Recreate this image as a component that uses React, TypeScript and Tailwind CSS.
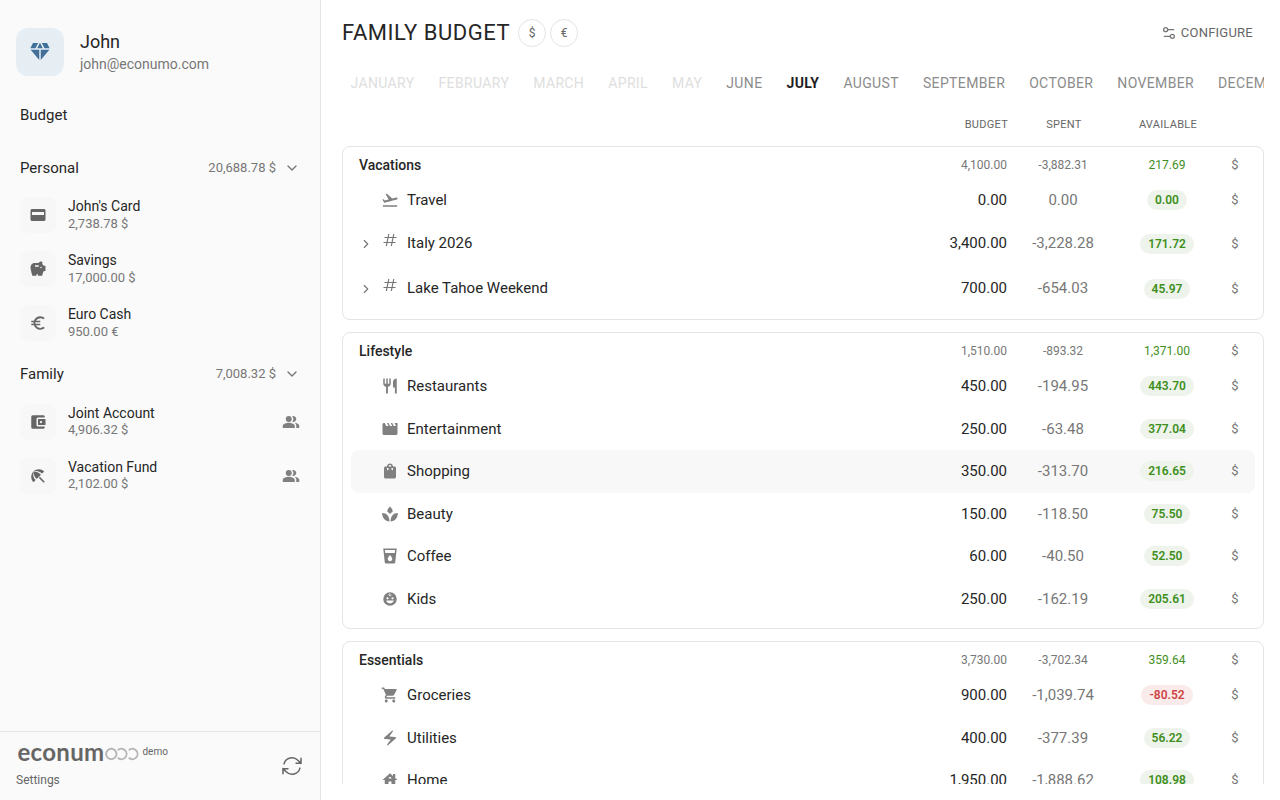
import type { ComponentType, ReactNode } from 'react';
import {
  MdAccountBalanceWallet,
  MdBeachAccess,
  MdDiamond,
  MdElectricBolt,
  MdEuroSymbol,
  MdFlightTakeoff,
  MdHouse,
  MdLocalDrink,
  MdMovie,
  MdPeopleAlt,
  MdRestaurant,
  MdSavings,
  MdShoppingBag,
  MdShoppingCart,
} from 'react-icons/md';
import { HiOutlineArrowPath } from 'react-icons/hi2';
import { ChevronDown, ChevronRight, Settings2 } from 'lucide-react';

type Icon = ComponentType<{ className?: string }>;

function CardIcon({ className }: { className?: string }) {
  return (
    <svg viewBox="0 0 24 24" fill="currentColor" className={className}>
      <path d="M20 4H4c-1.11 0-1.99.89-1.99 2L2 18c0 1.11.89 2 2 2h16c1.11 0 2-.89 2-2V6c0-1.11-.89-2-2-2zm0 8H4V8h16v4z" />
    </svg>
  );
}

function TagIcon({ className }: { className?: string }) {
  return (
    <svg viewBox="0 0 16 16" fill="none" stroke="currentColor" strokeWidth="1.200" className={className}>
      <path d="M2.500 5.500h12M1.500 10.500h12M6.800 2 4.300 14M11.800 2 9.300 14" />
    </svg>
  );
}

function LeavesIcon({ className }: { className?: string }) {
  return (
    <svg viewBox="0 0 24 24" fill="currentColor" className={className}>
      <path d="M12 2c2.200 2 3.700 4.400 3.700 6.600C14.200 9.500 13 10.600 12 12c-1-1.400-2.200-2.500-3.700-3.400C8.300 6.400 9.800 4 12 2z" />
      <path d="M1.500 10.500C7.500 10.500 11.300 15 11.300 22 5.500 21.500 1.500 17 1.500 10.500z" />
      <path d="M22.500 10.500C16.500 10.500 12.700 15 12.700 22c5.800-.5 9.800-5 9.800-11.500z" />
    </svg>
  );
}

function BabyIcon({ className }: { className?: string }) {
  return (
    <svg viewBox="0 0 24 24" fill="currentColor" className={className}>
      <path
        fillRule="evenodd"
        d="M12 3a9 9 0 1 0 0 18 9 9 0 0 0 0-18zM7.200 11a1.500 1.500 0 0 1 3 0 1.500 1.500 0 0 1-3 0zm6.600 0a1.500 1.500 0 0 1 3 0 1.500 1.500 0 0 1-3 0zM7 14h10c-.6 2.300-2.500 3.800-5 3.800S7.600 16.300 7 14z"
      />
      <path
        d="M11.800 4.500c-1.600.9-1.500 3 .3 3.200 1.600.1 1.800-1.700.7-2"
        fill="none"
        stroke="white"
        strokeWidth="1.200"
      />
    </svg>
  );
}

interface Account {
  name: string;
  balance: string;
  icon: Icon;
  shared?: boolean;
}

const personal: Account[] = [
  { name: "John's Card", balance: '2,738.78 $', icon: CardIcon },
  { name: 'Savings', balance: '17,000.00 $', icon: MdSavings },
  { name: 'Euro Cash', balance: '950.00 €', icon: MdEuroSymbol },
];

const family: Account[] = [
  { name: 'Joint Account', balance: '4,906.32 $', icon: MdAccountBalanceWallet, shared: true },
  { name: 'Vacation Fund', balance: '2,102.00 $', icon: MdBeachAccess, shared: true },
];

function AccountRow({ account }: { account: Account }) {
  const AccountIcon = account.icon;
  return (
    <div className="flex h-[54px] items-center pl-5 pr-5">
      <div className="flex size-9 items-center justify-center rounded-lg bg-[#f7f7f7]">
        <AccountIcon className="size-[18px] text-[#666666]" />
      </div>
      <div className={`ml-3 flex-1 ${account.shared ? 'pb-[2px]' : 'pb-px'}`}>
        <div className={`text-[14px] text-[#262626] ${account.shared ? 'leading-[18px]' : 'leading-[19px]'}`}>
          {account.name}
        </div>
        <div className="text-[13px] leading-4 text-[#777777]">{account.balance}</div>
      </div>
      {account.shared && <MdPeopleAlt className="size-[18px] text-[#808080]" />}
    </div>
  );
}

function FolderHeader({ title, total }: { title: string; total: string }) {
  return (
    <div className="flex h-6 items-center pl-5 pr-5">
      <span className="flex-1 text-[15px] text-[#262626]">{title}</span>
      <span className="text-[13px] text-[#777777]">{total}</span>
      <ChevronDown className="ml-2 size-4 text-[#777777]" strokeWidth={2} />
    </div>
  );
}

function Logo() {
  return (
    <div className="flex h-6 items-center pl-[1.5px]">
      <span className="pb-[5px] font-['Lato'] text-[24px] leading-6 font-bold tracking-[0.3px] text-[#666666]">
        econum
      </span>
      <svg
        viewBox="0 0 34 14"
        className="ml-px h-[14px] w-[34px]"
        fill="none"
        stroke="#b5b5b5"
        strokeWidth="1.900"
      >
        <circle cx="6.300" cy="7" r="5.200" />
        <path d="M12.800 3.200a5.200 5.200 0 1 1 0 7.600" />
        <path d="M23.800 3.200a5.200 5.200 0 1 1 0 7.600" />
      </svg>
      <span className="mb-[4px] ml-[3px] text-[10px] leading-3 text-[#666666]">demo</span>
    </div>
  );
}

function Sidebar() {
  return (
    <aside className="flex h-full w-[321px] shrink-0 flex-col border-r border-[#e4e4e4] bg-[#fafafa]">
      <div className="flex items-center px-4 pt-7">
        <div className="flex size-12 items-center justify-center rounded-xl bg-[#e6eef4]">
          <MdDiamond className="size-6 text-[#427099]" />
        </div>
        <div className="ml-4">
          <div className="text-[18px] leading-6 text-[#262626]">John</div>
          <div className="text-[14px] leading-5 text-[#777777]">john@econumo.com</div>
        </div>
      </div>
      <div className="mt-[27px] h-6 pl-5 text-[15px] leading-6 text-[#262626]">Budget</div>
      <div className="mt-[29px]">
        <FolderHeader title="Personal" total="20,688.78 $" />
        <div className="pt-2">
          {personal.map((a) => (
            <AccountRow key={a.name} account={a} />
          ))}
        </div>
      </div>
      <div className="mt-3">
        <FolderHeader title="Family" total="7,008.32 $" />
        <div className="pt-[9px]">
          {family.map((a) => (
            <AccountRow key={a.name} account={a} />
          ))}
        </div>
      </div>
      <footer className="mt-auto flex h-[69px] items-center justify-between border-t border-[#e4e4e4] pl-4 pr-4">
        <div>
          <Logo />
          <div className="mt-1 text-[12px] leading-5 text-[#666666]">Settings</div>
        </div>
        <HiOutlineArrowPath className="size-6 text-[#666666]" />
      </footer>
    </aside>
  );
}

const months = [
  'January', 'February', 'March', 'April', 'May', 'June',
  'July', 'August', 'September', 'October', 'November', 'December',
];

function monthColor(index: number) {
  if (index < 5) return 'text-[#dedede]';
  if (index === 6) return 'font-bold text-[#1f1f1f]';
  return 'text-[#8c8c8c]';
}

interface Category {
  name: string;
  icon?: Icon;
  budget: string;
  spent: string;
  available: string;
  highlighted?: boolean;
}

interface Folder {
  name: string;
  budget: string;
  spent: string;
  available: string;
  rows: Category[];
}

const folders: Folder[] = [
  {
    name: 'Vacations',
    budget: '4,100.00',
    spent: '-3,882.31',
    available: '217.69',
    rows: [
      { name: 'Travel', icon: MdFlightTakeoff, budget: '0.00', spent: '0.00', available: '0.00' },
      { name: 'Italy 2026', budget: '3,400.00', spent: '-3,228.28', available: '171.72' },
      { name: 'Lake Tahoe Weekend', budget: '700.00', spent: '-654.03', available: '45.97' },
    ],
  },
  {
    name: 'Lifestyle',
    budget: '1,510.00',
    spent: '-893.32',
    available: '1,371.00',
    rows: [
      { name: 'Restaurants', icon: MdRestaurant, budget: '450.00', spent: '-194.95', available: '443.70' },
      { name: 'Entertainment', icon: MdMovie, budget: '250.00', spent: '-63.48', available: '377.04' },
      { name: 'Shopping', icon: MdShoppingBag, budget: '350.00', spent: '-313.70', available: '216.65', highlighted: true },
      { name: 'Beauty', icon: LeavesIcon, budget: '150.00', spent: '-118.50', available: '75.50' },
      { name: 'Coffee', icon: MdLocalDrink, budget: '60.00', spent: '-40.50', available: '52.50' },
      { name: 'Kids', icon: BabyIcon, budget: '250.00', spent: '-162.19', available: '205.61' },
    ],
  },
  {
    name: 'Essentials',
    budget: '3,730.00',
    spent: '-3,702.34',
    available: '359.64',
    rows: [
      { name: 'Groceries', icon: MdShoppingCart, budget: '900.00', spent: '-1,039.74', available: '-80.52' },
      { name: 'Utilities', icon: MdElectricBolt, budget: '400.00', spent: '-377.39', available: '56.22' },
      { name: 'Home', icon: MdHouse, budget: '1,950.00', spent: '-1,888.62', available: '108.98' },
    ],
  },
];

function Columns({ children, className }: { children: ReactNode; className: string }) {
  return (
    <div className={`grid grid-cols-[1fr_100px_112px_96px_40px] items-center ${className}`}>{children}</div>
  );
}

function CategoryRow({ row }: { row: Category }) {
  const RowIcon = row.icon;
  const negative = row.available.startsWith('-');
  const tag = !RowIcon;
  return (
    <Columns
      className={`mx-2 rounded-lg ${tag ? 'h-[44.75px] pb-[2px]' : 'h-[42.5px]'} ${row.highlighted ? 'bg-[#f8f8f8]' : ''}`}
    >
      <div className="flex items-center">
        {RowIcon ? (
          <RowIcon className="ml-[30px] size-[18px] text-[#808080]" />
        ) : (
          <>
            <ChevronRight className="mt-[2px] ml-2 size-[14px] text-[#777777]" strokeWidth={2} />
            <TagIcon className="mb-[5px] ml-[9px] size-4 text-[#777777]" />
          </>
        )}
        <span className={`text-[15px] leading-5 text-[#262626] ${RowIcon ? 'ml-2' : 'ml-[9px]'}`}>
          {row.name}
        </span>
      </div>
      <div className="text-right text-[15px] leading-5 text-[#262626]">{row.budget}</div>
      <div className="text-center text-[15px] leading-5 text-[#777777]">{row.spent}</div>
      <div className={`flex justify-center ${tag ? 'pt-[2px]' : ''}`}>
        <span
          className={`rounded-full px-2 text-[12px] leading-5 font-semibold ${
            negative ? 'bg-[#faebeb] text-[#cf4444]' : 'bg-[#eef3eb] text-[#3f8f1d]'
          }`}
        >
          {row.available}
        </span>
      </div>
      <div className={`text-center text-[13px] leading-5 text-[#777777] ${tag ? 'pt-[2px]' : ''}`}>$</div>
    </Columns>
  );
}

function FolderCard({ folder }: { folder: Folder }) {
  return (
    <section className="shrink-0 rounded-lg border border-[#e4e4e4] pb-2">
      <Columns className="mx-2 h-8 pt-1">
        <div className="pl-2 text-[14px] font-medium text-[#262626]">{folder.name}</div>
        <div className="text-right text-[12px] text-[#777777]">{folder.budget}</div>
        <div className="text-center text-[12px] text-[#777777]">{folder.spent}</div>
        <div className="text-center text-[12px] text-[#3f8f1d]">{folder.available}</div>
        <div className="text-center text-[13px] text-[#777777]">$</div>
      </Columns>
      {folder.rows.map((row) => (
        <CategoryRow key={row.name} row={row} />
      ))}
    </section>
  );
}

function CurrencyBadge({ symbol }: { symbol: string }) {
  return (
    <span className="flex size-7 items-center justify-center rounded-full border border-[#e4e4e4] text-[12px] text-[#666666]">
      {symbol}
    </span>
  );
}

export default function App() {
  return (
    <div className="flex h-[800px] w-[1280px] overflow-hidden bg-white font-['Roboto',sans-serif]">
      <Sidebar />
      <main className="flex min-w-0 flex-1 flex-col pr-4 pb-4 pl-[21px]">
        <header className="flex h-[66px] items-center">
          <h1 className="text-[22px] leading-8 tracking-[0.55px] text-[#262626]">FAMILY BUDGET</h1>
          <div className="ml-2 flex gap-1">
            <CurrencyBadge symbol="$" />
            <CurrencyBadge symbol="€" />
          </div>
          <button className="mr-[11px] ml-auto flex items-center gap-1 text-[13px] tracking-[0.24px] text-[#666666]">
            <Settings2 className="size-4 text-[#777777]" strokeWidth={2} />
            CONFIGURE
          </button>
        </header>
        <nav className="flex h-[34px] items-center gap-6 overflow-hidden pl-[8.5px] text-[14px] tracking-[0.36px]">
          {months.map((m, i) => (
            <span key={m} className={`shrink-0 uppercase ${monthColor(i)}`}>
              {m}
            </span>
          ))}
        </nav>
        <Columns className="mr-2 ml-[10px] mb-[9px] h-[37px] pt-[13px] text-[11px] tracking-[0.28px] text-[#666666]">
          <span />
          <span className="text-right">BUDGET</span>
          <span className="text-center">SPENT</span>
          <span className="text-center">AVAILABLE</span>
        </Columns>
        <div className="flex min-h-0 flex-1 flex-col gap-3 overflow-hidden">
          {folders.map((f) => (
            <FolderCard key={f.name} folder={f} />
          ))}
        </div>
      </main>
    </div>
  );
}
